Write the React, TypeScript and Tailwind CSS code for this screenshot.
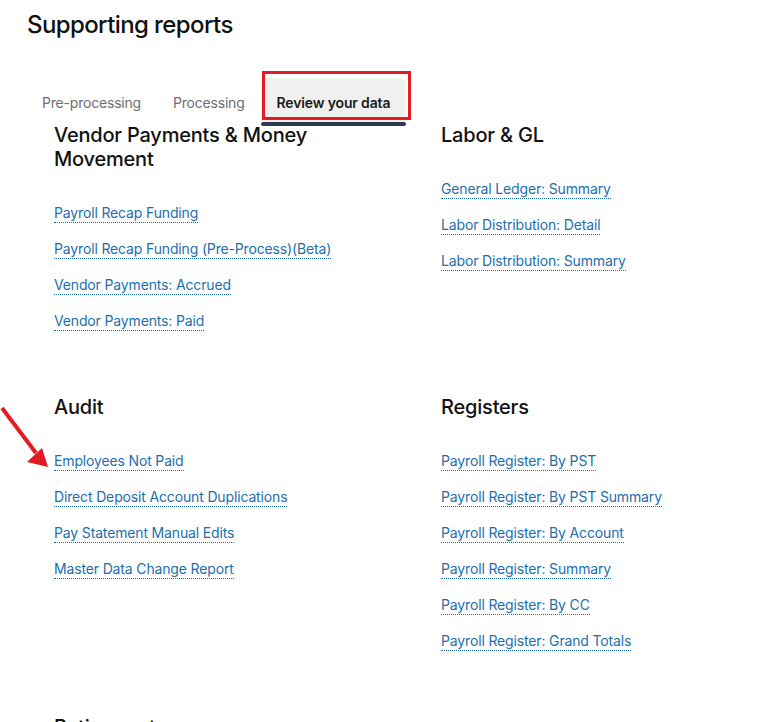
import React from "react";

type Section = { title: string; links: string[] };

const rows: [Section, Section | null][] = [
  [
    {
      title: "Vendor Payments & Money Movement",
      links: [
        "Payroll Recap Funding",
        "Payroll Recap Funding (Pre-Process)(Beta)",
        "Vendor Payments: Accrued",
        "Vendor Payments: Paid",
      ],
    },
    {
      title: "Labor & GL",
      links: [
        "General Ledger: Summary",
        "Labor Distribution: Detail",
        "Labor Distribution: Summary",
      ],
    },
  ],
  [
    {
      title: "Audit",
      links: [
        "Employees Not Paid",
        "Direct Deposit Account Duplications",
        "Pay Statement Manual Edits",
        "Master Data Change Report",
      ],
    },
    {
      title: "Registers",
      links: [
        "Payroll Register: By PST",
        "Payroll Register: By PST Summary",
        "Payroll Register: By Account",
        "Payroll Register: Summary",
        "Payroll Register: By CC",
        "Payroll Register: Grand Totals",
      ],
    },
  ],
  [
    {
      title: "Retirement",
      links: ["Retirement Contributions", "Retirement Census"],
    },
    null,
  ],
];

function ReportSection({ section }: { section: Section }) {
  return (
    <div className="flex flex-col">
      <h3 className="w-[300px] text-[20px] leading-[24px] font-medium text-[#111] tracking-[-0.2px]">
        {section.title}
      </h3>
      <ul className="mt-[30px] flex flex-col gap-[12px]">
        {section.links.map((l) => (
          <li key={l} className="h-[24px] leading-[23px]">
            <a
              href="#"
              className="text-[14px] tracking-[-0.15px] text-[#1c6fae] border-b border-dotted border-[#1c6fae] pb-[1px]"
            >
              {l}
            </a>
          </li>
        ))}
      </ul>
    </div>
  );
}

export default function App() {
  const tabs = ["Pre-processing", "Processing", "Review your data"];
  return (
    <div
      className="relative min-h-[722px] bg-white overflow-hidden"
      style={{ fontFamily: "Inter, 'Noto Sans', sans-serif" }}
    >
      <h1 className="pt-[9px] pl-[27px] text-[24px] leading-[32px] font-medium text-[#111] tracking-[-0.6px]">
        Supporting reports
      </h1>

      <div className="mt-[37px] pl-[26px] flex">
        {tabs.map((t, i) => {
          const active = i === tabs.length - 1;
          return (
            <div key={t} className="flex flex-col">
              <div
                className={
                  active
                    ? "px-4 pt-[15px] pb-[9px] text-[14px] leading-[20px] font-semibold tracking-[-0.15px] text-[#1a1a1a] bg-[#f0f0f0] rounded-t-[6px]"
                    : "px-4 pt-[15px] pb-[9px] text-[14px] leading-[20px] tracking-[-0.2px] text-[#6e6e6e]"
                }
              >
                {t}
              </div>
              <div
                className={
                  active
                    ? "h-[4px] rounded-full bg-[#2e3a4f]"
                    : "h-[4px]"
                }
              />
            </div>
          );
        })}
      </div>

      <div className="-mt-[3px] pl-[54px] flex flex-col gap-[62px]">
        {rows.map(([a, b], i) => (
          <div key={i} className="grid grid-cols-[387px_1fr]">
            <ReportSection section={a} />
            {b ? <ReportSection section={b} /> : <div />}
          </div>
        ))}
      </div>

      {/* highlight box around the active tab */}
      <div className="absolute left-[262px] top-[71px] w-[149px] h-[49px] border-[3px] border-[#e31b23] pointer-events-none" />

      {/* pointer arrow toward the first audit report */}
      <svg
        className="absolute left-0 top-[400px] pointer-events-none"
        width="60"
        height="75"
        viewBox="0 0 60 75"
      >
        <line x1="2" y1="8" x2="36" y2="53" stroke="#e31b23" strokeWidth="4" />
        <polygon points="48,67 27,62 42,48" fill="#e31b23" />
      </svg>
    </div>
  );
}
